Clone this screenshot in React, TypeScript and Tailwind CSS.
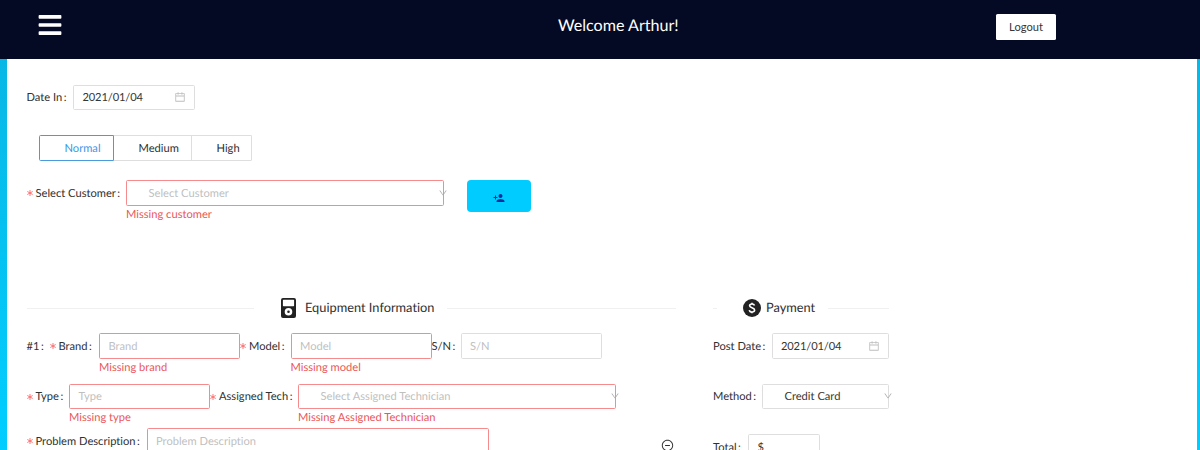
import React from "react";
import { FaBars } from "react-icons/fa";
import { MdPersonAdd } from "react-icons/md";
import { AiOutlineCalendar, AiOutlineDown, AiOutlineMinusCircle } from "react-icons/ai";

function Label({ children, required, className = "" }: { children: React.ReactNode; required?: boolean; className?: string }) {
  return (
    <div className={`flex h-[25.5px] shrink-0 items-center whitespace-nowrap pt-[3px] ${className}`}>
      {required && (
        <svg viewBox="0 0 6 6" className="mr-[3px] mb-[2px] size-[6px] shrink-0" fill="none" stroke="#ff6668" strokeWidth="0.9">
          <path d="M3 0V6M0.3 1.5L5.7 4.5M5.7 1.5L0.3 4.5" />
        </svg>
      )}
      <span>{children}</span>
      <span className="ml-[1.5px]">:</span>
    </div>
  );
}

function Field({ placeholder, value, error, select, date, indent, className = "" }: {
  placeholder?: string; value?: string; error?: string; select?: boolean; date?: boolean; indent?: boolean; className?: string;
}) {
  return (
    <div className={`shrink-0 ${className}`}>
      <div className={`flex h-[25.5px] items-center justify-between rounded-[1.6px] border bg-white ${indent ? "pl-[21.5px]" : "pl-[8.5px]"} ${error ? "border-[#f58b8d]" : "border-[#dedede]"}`}>
        <span className={`pt-[3px] ${date ? "tracking-[-0.15px]" : ""} ${value ? "text-[#363636]" : "text-[#bfbfbf]"}`}>{value ?? placeholder}</span>
        {date && <AiOutlineCalendar className="mr-[8px] size-[12px] text-[#bdbdbd]" />}
        {select && <AiOutlineDown className="-mr-[5px] size-[10px] text-[#a8a8a8]" />}
      </div>
      {error && <div className="h-[17px] whitespace-nowrap leading-[18.2px] text-[#e95759]">{error}</div>}
    </div>
  );
}

export default function App() {
  return (
    <div className="flex h-[450px] w-[1200px] flex-col overflow-hidden bg-white font-['Lato',sans-serif] text-[11.15px] text-[#303030] [font-variant-ligatures:none] [text-rendering:geometricPrecision]">
      <header className="flex h-[59px] shrink-0 items-start bg-[#050a24] text-white">
        <FaBars className="mt-[12px] ml-[37px] size-[26px]" />
        <h1 className="mt-[14px] ml-[495px] w-[438px] text-[16.1px] leading-6">Welcome Arthur!</h1>
        <button className="mt-[14px] h-[26px] w-[60px] rounded-[1.6px] bg-white text-[#363636]">Logout</button>
      </header>
      <main className="h-[391px] shrink-0 bg-linear-to-b from-[#09b7e5] to-[#00ceff] pr-[3.5px] pl-[6.5px]">
        <div className="h-full overflow-hidden bg-white pt-[25.5px] pl-[20px]">
          <div className="flex">
            <Label className="w-[46.5px]">Date In</Label>
            <Field value="2021/01/04" date className="w-[122px]" />
          </div>
          <div className="mt-[25px] ml-[12.5px] flex h-[26px]">
            <div className="flex w-[75px] items-center rounded-l-[1.6px] border border-[#4a9bdc] pt-[2px] pl-[24.5px] text-[#4097e5]">Normal</div>
            <div className="flex w-[78px] items-center border-y border-r border-[#dedede] pt-[2px] pl-[24.5px]">Medium</div>
            <div className="flex w-[60px] items-center rounded-r-[1.6px] border-y border-r border-[#dedede] pt-[2px] pl-[24.5px]">High</div>
          </div>
          <div className="mt-[19px] flex h-[44px]">
            <Label required className="w-[99.5px]">Select Customer</Label>
            <Field placeholder="Select Customer" error="Missing customer" select indent className="w-[317.5px]" />
            <button className="ml-[23.5px] flex h-[32px] w-[64px] items-center justify-center rounded-[4px] bg-[#00ccff] pt-[4px] text-[#0a2ea0]"><MdPersonAdd className="size-[12px]" /></button>
          </div>
          <div className="mt-[71px] flex">
            <section className="w-[649.5px]">
              <div className="flex h-[26px] items-center">
                <div className="h-px w-[227px] bg-[#f0f0f0]" />
                <svg viewBox="0 0 15 20" className="ml-[27.5px] h-[20px] w-[15px]"><path fillRule="evenodd" fill="#222" d="M2 0h11q2 0 2 2v16q0 2-2 2H2q-2 0-2-2V2Q0 0 2 0zM2.5 1.8q-.6 0-.6.6v5.2q0 .6.6.6h10q.6 0 .6-.6V2.4q0-.6-.6-.6zM7.5 10a3.8 3.8 0 1 0 0 7.6a3.8 3.8 0 0 0 0-7.6zM7.5 12.5a1.3 1.3 0 1 1 0 2.6a1.3 1.3 0 0 1 0-2.6z" /></svg>
                <h2 className="ml-[9px] w-[142px] whitespace-nowrap text-[12.8px]">Equipment Information</h2>
                <div className="h-px flex-1 bg-[#f0f0f0]" />
              </div>
              <div className="mt-[12px] flex h-[50.5px]">
                <Label className="w-[23px]">#1</Label>
                <Label required className="w-[49.5px]">Brand</Label>
                <Field placeholder="Brand" error="Missing brand" className="w-[141px]" />
                <Label required className="w-[50.5px]">Model</Label>
                <Field placeholder="Model" error="Missing model" className="w-[141px]" />
                <Label className="w-[29px]">S/N</Label>
                <Field placeholder="S/N" className="w-[141.5px]" />
              </div>
              <div className="flex h-[44.5px]">
                <Label required className="w-[42.5px]">Type</Label>
                <Field placeholder="Type" error="Missing type" className="w-[141px]" />
                <Label required className="w-[88px]">Assigned Tech</Label>
                <Field placeholder="Select Assigned Technician" error="Missing Assigned Technician" select indent className="w-[317.5px]" />
              </div>
              <div className="flex">
                <Label required className="w-[120px]">Problem Description</Label>
                <div className="h-[48px] w-[342.5px] rounded-[1.6px] border border-[#f58b8d] pt-[4px] pl-[8.5px] leading-[17.5px] text-[#bfbfbf]">Problem Description</div>
                <AiOutlineMinusCircle className="mt-[11px] ml-[172px] size-[13px]" />
              </div>
            </section>
            <section className="ml-[37px] w-[176px]">
              <div className="flex h-[26px] items-center">
                <div className="h-px w-[4px] bg-[#f0f0f0]" />
                <svg viewBox="0 0 18 18" className="ml-[26px] size-[18px]"><circle cx="9" cy="9" r="9" fill="#222" /><path d="M11.5 6.5C11.2 5.5 10.3 5 9 5C7.6 5 6.6 5.6 6.6 6.8C6.6 9.3 11.6 8.2 11.6 11C11.6 12.2 10.5 13 9 13C7.5 13 6.5 12.3 6.3 11.1M9 3.7V5M9 13V14.3" fill="none" stroke="white" strokeWidth="1.6" /></svg>
                <h2 className="ml-[5px] w-[62px] text-[12.8px]">Payment</h2>
                <div className="h-px flex-1 bg-[#f0f0f0]" />
              </div>
              <div className="mt-[12px] flex h-[50.5px]"><Label className="w-[58.5px]">Post Date</Label><Field value="2021/01/04" date className="w-[117.5px]" /></div>
              <div className="flex h-[50.5px]"><Label className="w-[49px]">Method</Label><Field value="Credit Card" select indent className="w-[127px]" /></div>
              <div className="flex"><Label className="w-[35px]">Total</Label><Field value="$" className="w-[72px]" /></div>
            </section>
          </div>
        </div>
      </main>
    </div>
  );
}
